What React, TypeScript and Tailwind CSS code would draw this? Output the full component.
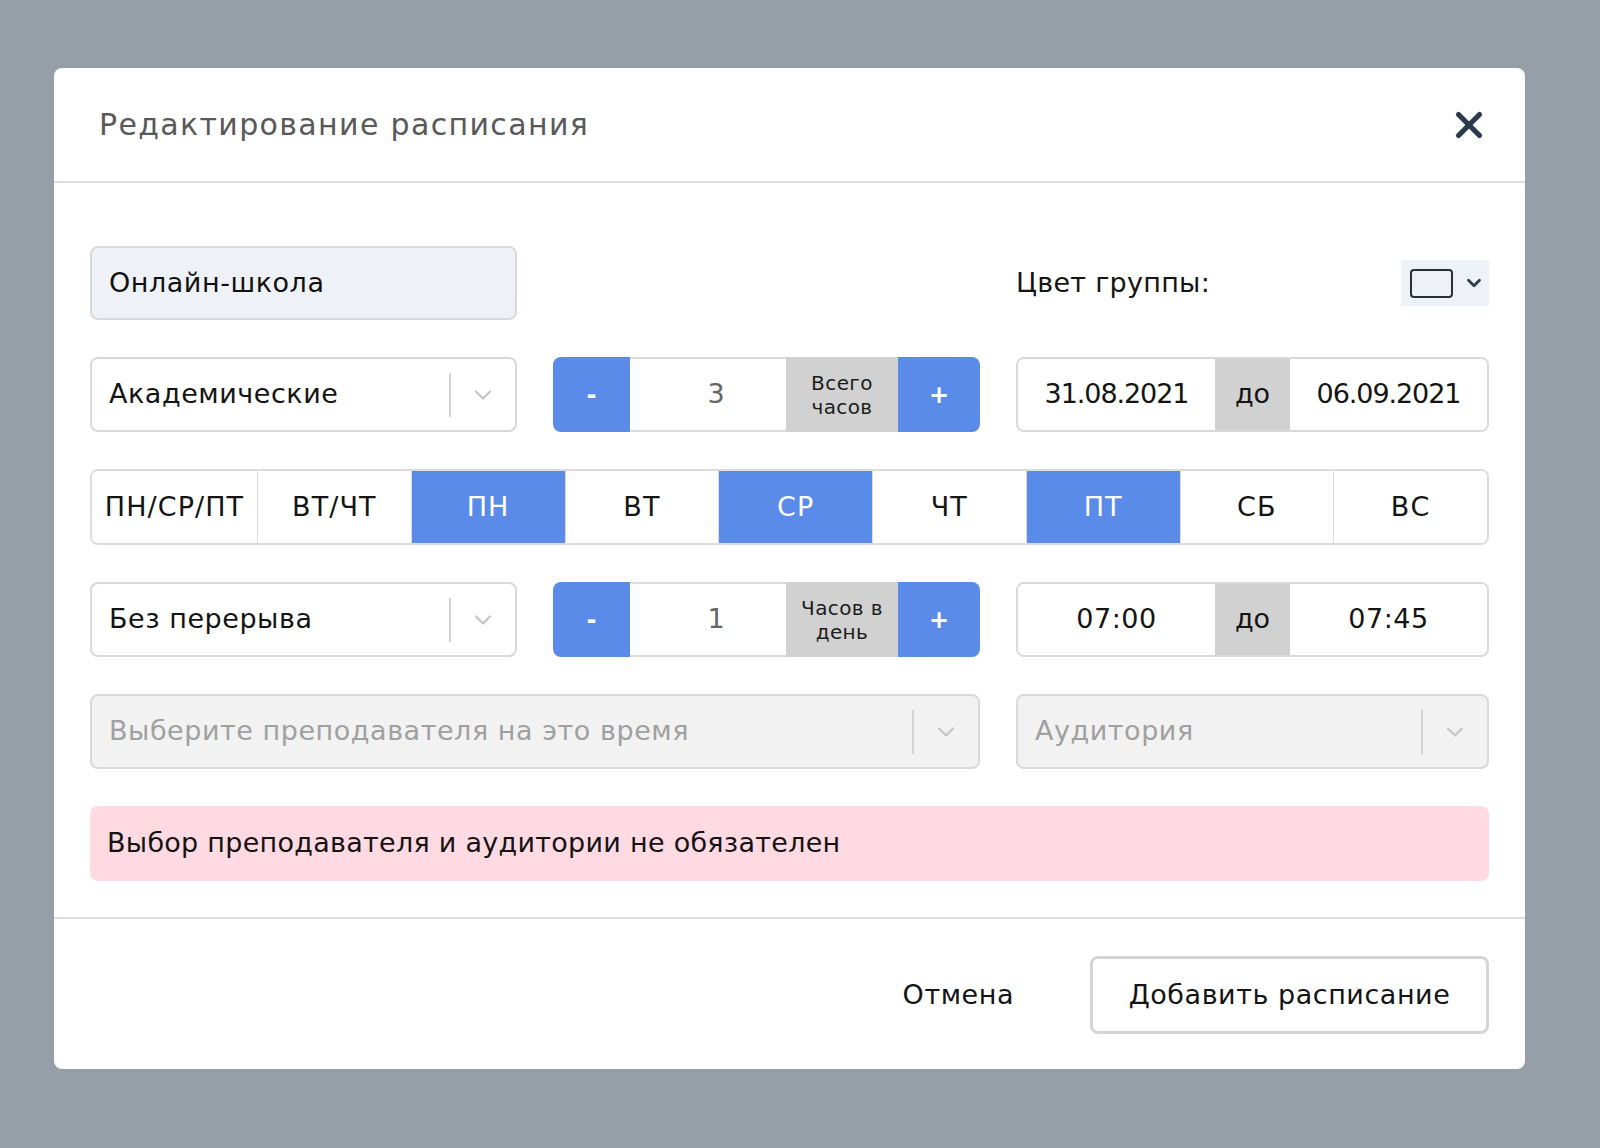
import { X, ChevronDown } from "lucide-react";

const font = "[font-family:'DejaVu_Sans','Open_Sans',sans-serif]";
const txt = "text-[27px] tracking-[0.02em]";

function SelectBox({
  text,
  disabled,
  className = "",
}: {
  text: string;
  disabled?: boolean;
  className?: string;
}) {
  return (
    <div
      className={`flex h-[75px] items-center rounded-lg border-2 border-[#d9d9d9] ${
        disabled ? "bg-[#f2f2f2] text-[#a0a0a0]" : "bg-white text-[#141414]"
      } ${className}`}
    >
      <span className={`flex-1 truncate pl-[17px] ${txt}`}>{text}</span>
      <span className="h-[44px] w-[2px] bg-[#d4d4d4]" />
      <span className="flex w-[64px] items-center justify-center">
        <ChevronDown className="h-[28px] w-[28px] text-[#c6c6c6]" strokeWidth={2} />
      </span>
    </div>
  );
}

function Stepper({ value, label }: { value: string; label: [string, string] }) {
  return (
    <div className="flex h-[75px] overflow-hidden rounded-lg">
      <button className="w-[77px] bg-[#5b8be9] text-[24px] font-bold text-white">-</button>
      <div className="flex w-[156px] items-center justify-center border-y-2 border-[#dcdcdc] bg-white pl-[16px] text-[27px] text-[#666]">
        {value}
      </div>
      <div className="flex w-[112px] flex-col items-center justify-center bg-[#d1d1d1] text-[20px] leading-[24px] tracking-[0.02em] text-[#1c1c1c]">
        <span>{label[0]}</span>
        <span>{label[1]}</span>
      </div>
      <button className="flex-1 bg-[#5b8be9] text-[24px] font-bold text-white">+</button>
    </div>
  );
}

function Range({ from, to, tight }: { from: string; to: string; tight?: boolean }) {
  const num = tight ? "tracking-[-0.04em]" : "tracking-[0.02em]";
  return (
    <div className="flex h-[75px] overflow-hidden rounded-lg border-2 border-[#d9d9d9] text-[27px] text-[#141414]">
      <div className={`flex w-[197px] items-center justify-center bg-white ${num}`}>{from}</div>
      <div className="flex w-[75px] items-center justify-center bg-[#d1d1d1]">до</div>
      <div className={`flex flex-1 items-center justify-center bg-white ${num}`}>{to}</div>
    </div>
  );
}

const days = [
  { t: "ПН/СР/ПТ", on: false },
  { t: "ВТ/ЧТ", on: false },
  { t: "ПН", on: true },
  { t: "ВТ", on: false },
  { t: "СР", on: true },
  { t: "ЧТ", on: false },
  { t: "ПТ", on: true },
  { t: "СБ", on: false },
  { t: "ВС", on: false },
];

export default function App() {
  return (
    <div className={`min-h-[1148px] bg-[#969ea8] pl-[54px] pt-[68px] ${font}`}>
      <div className="w-[1471px] rounded-lg bg-white">
        {/* header */}
        <div className="flex h-[115px] items-center justify-between border-b-2 border-[#dedede] pl-[45px] pr-[35px]">
          <h1 className="text-[30px] font-medium tracking-[0.045em] text-[#595959]">
            Редактирование расписания
          </h1>
          <X className="h-[42px] w-[42px] text-[#2c3b4c]" strokeWidth={3} />
        </div>

        {/* body */}
        <div className="grid grid-cols-[427px_427px_1fr] gap-x-[36px] gap-y-[37px] px-[36px] pb-[36px] pt-[63px]">
          <div className={`flex h-[74px] items-center rounded-lg border-2 border-[#d9d9d9] bg-[#eef2f6] pl-[17px] text-[#111] ${txt}`}>
            Онлайн-школа
          </div>
          <div />
          <div className="flex items-center justify-between">
            <span className="text-[27px] tracking-[0.01em] text-[#141414]">Цвет группы:</span>
            <div className="flex h-[46px] w-[88px] items-center gap-[10px] bg-[#eef2f6] pl-[9px]">
              <span className="h-[29px] w-[43px] rounded-[4px] border-2 border-[#2a2f36] bg-[#eef2f7]" />
              <ChevronDown className="h-[22px] w-[22px] text-[#2c3b4c]" strokeWidth={3} />
            </div>
          </div>

          <SelectBox text="Академические" />
          <Stepper value="3" label={["Всего", "часов"]} />
          <Range from="31.08.2021" to="06.09.2021" tight />

          <div className="col-span-3 flex h-[76px] overflow-hidden rounded-lg border-2 border-[#dcdcdc] text-[27px] tracking-[0.04em]">
            {days.map((d, i) => (
              <div
                key={d.t}
                className={`flex items-center justify-center ${i === 0 ? "w-[165px]" : "flex-1"} ${
                  i > 0 ? "border-l border-[#dcdcdc]" : ""
                } ${d.on ? "bg-[#5b8be9] text-white" : "bg-white text-[#141414]"}`}
              >
                {d.t}
              </div>
            ))}
          </div>

          <SelectBox text="Без перерыва" />
          <Stepper value="1" label={["Часов в", "день"]} />
          <Range from="07:00" to="07:45" />

          <SelectBox text="Выберите преподавателя на это время" disabled className="col-span-2" />
          <SelectBox text="Аудитория" disabled />

          <div className="col-span-3 flex h-[75px] items-center rounded-lg bg-[#ffdae3] pl-[17px] text-[27px] tracking-[0.01em] text-[#141414]">
            Выбор преподавателя и аудитории не обязателен
          </div>
        </div>

        {/* footer */}
        <div className="flex items-center justify-end gap-[76px] border-t-2 border-[#dedede] pb-[35px] pr-[36px] pt-[37px]">
          <button className={`text-[#141414] ${txt}`}>Отмена</button>
          <button className={`h-[78px] w-[399px] rounded-lg border-[3px] border-[#d5d5d5] text-[#141414] ${txt}`}>
            Добавить расписание
          </button>
        </div>
      </div>
    </div>
  );
}
